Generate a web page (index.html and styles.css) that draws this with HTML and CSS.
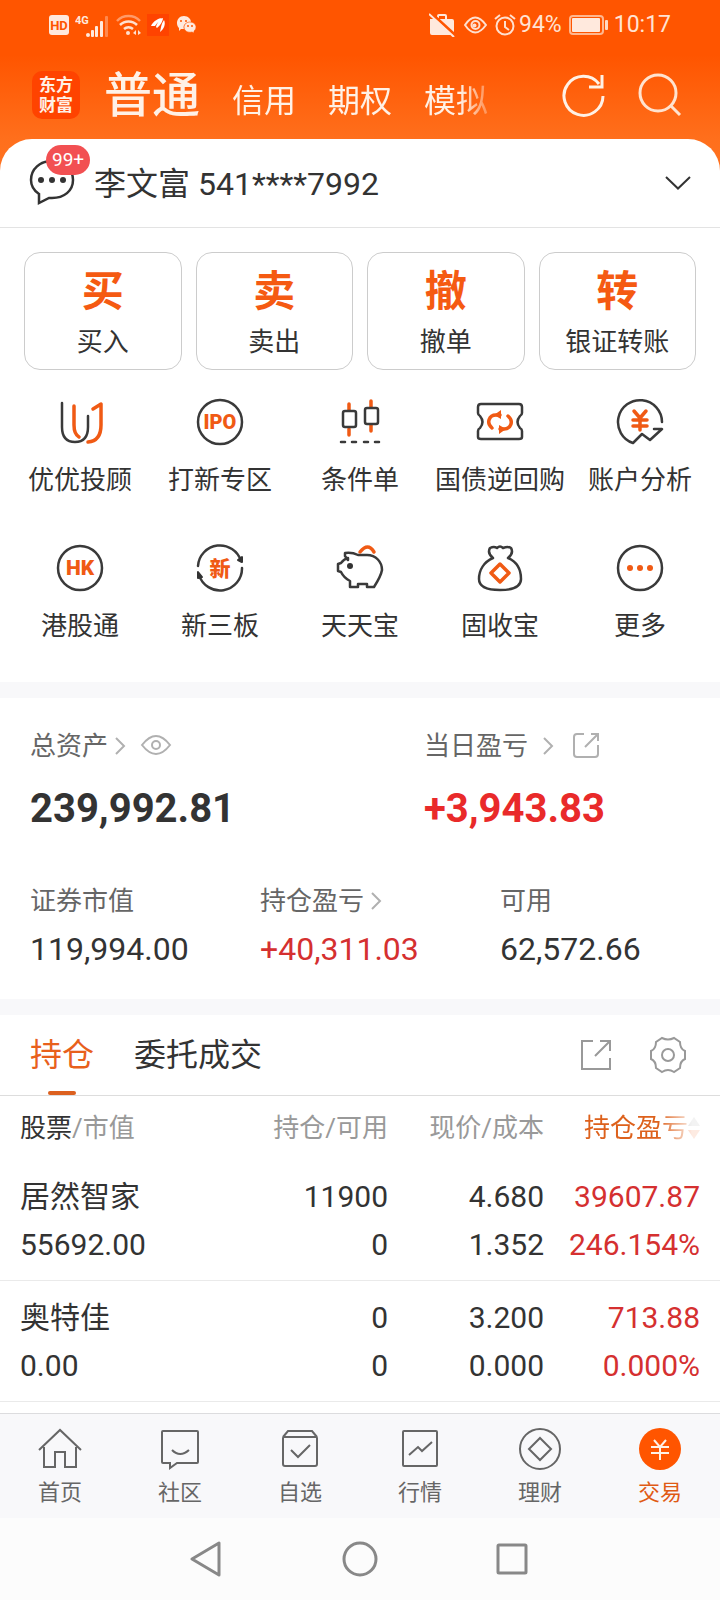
FILE: index.html
```html
<!DOCTYPE html>
<html lang="zh-CN">
<head>
<meta charset="utf-8">
<meta name="viewport" content="width=device-width, initial-scale=1">
<title>东方财富 - 交易</title>
<link rel="stylesheet" href="styles.css">
</head>
<body>
<div class="top">
  <div class="status">
    <div class="status-left">
      <svg width="20" height="20" viewBox="0 0 20 20"><rect width="20" height="20" rx="3" fill="#ffe9dd"/><text x="10" y="15" class="hd">HD</text></svg>
      <svg class="signal" width="34" height="24" viewBox="0 0 34 24"><text x="0" y="11" class="g4">4G</text><g fill="#ffe9dd"><circle cx="13" cy="22" r="2"/><rect x="16" y="17" width="3" height="7" rx="1"/><rect x="20" y="13" width="3" height="11" rx="1"/><rect x="25" y="8" width="3" height="16" rx="1"/><rect x="30" y="3" width="3" height="21" rx="1" opacity=".35"/></g></svg>
      <svg class="wifi" width="26" height="22" viewBox="0 0 26 22" fill="none" stroke="#ffe0cf" stroke-width="2.500"><path d="M1 7a16 16 0 0 1 23 0" opacity=".5"/><path d="M4 11a12 12 0 0 1 17 0"/><path d="M8 15a7 7 0 0 1 9 0"/><circle cx="12" cy="19" r="2" fill="#ffe0cf" stroke="none"/><path d="M20 16l-3 3 3 2zM22 16l3 3-3 2z" fill="#ffe0cf" stroke="none"/></svg>
      <svg width="22" height="22" viewBox="0 0 22 22"><rect width="22" height="22" fill="#ff4300"/><path d="M4 12C6 7 12 4 15 4 13 6 10 9 8 12zM9 13c1-4 4-8 7-9 0 3-3 8-6 10zM13 18c1-4 1-8 4-12 2 4 0 9-4 12z" fill="#fff"/></svg>
      <svg class="wechat" width="21" height="20" viewBox="0 0 21 20"><path d="M8 1c4 0 7 3 7 6-5 0-8 3-7 7l-3 0-2 2v-3C-1 9 1 1 8 1z" fill="#ffe9dd"/><path d="M14 7c4 0 6 3 6 5 0 2-1 3-2 4v2l-2-1c-4 1-8-1-8-5 0-3 3-5 6-5z" fill="#ffe9dd" stroke="#ff5500" stroke-width=".6"/><g fill="#ff5500"><circle cx="5" cy="6" r="1"/><circle cx="10" cy="6" r="1"/><circle cx="12" cy="11" r="1"/><circle cx="16" cy="11" r="1"/></g></svg>
    </div>
    <div class="status-right">
      <svg width="26" height="24" viewBox="0 0 26 24"><path d="M1 6h7V3q0-2 2-2h6q2 0 2 2v3h5q2 0 2 2v14H3q-2 0-2-2z" fill="#ffe9dd"/><path d="M10 3h6v3h-6z" fill="#ff5500"/><path d="M2 0l25 23" stroke="#ff5500" stroke-width="3"/><path d="M0 1l25 23" stroke="#ffe9dd" stroke-width="2"/></svg>
      <svg class="s-eye" width="23" height="18" viewBox="0 0 23 18" fill="none" stroke="#ffe0cf" stroke-width="2"><path d="M1 9q10-15 21 0-11 15-21 0z"/><circle cx="11.500" cy="9" r="4"/><circle cx="10.500" cy="9.500" r="2" fill="#ffe0cf" stroke="none"/></svg>
      <svg class="s-alarm" width="22" height="22" viewBox="0 0 22 22" fill="none" stroke="#ffe0cf" stroke-width="2"><circle cx="11" cy="12" r="8.500"/><path d="M1 5l5-4M16 1l5 4M11 7v6l4 3"/></svg>
      <span>94%</span>
      <svg class="battery" width="39" height="20" viewBox="0 0 39 20"><rect x="1" y="1" width="33" height="18" rx="3" fill="none" stroke="#ffb78f" stroke-width="2"/><rect x="3" y="3" width="28" height="14" rx="1" fill="#ffe9dd"/><rect x="36" y="5" width="3" height="10" rx="1" fill="#ffd8c2"/></svg>
      <time>10:17</time>
    </div>
  </div>
  <header class="header">
    <div class="logo"><span>东方</span><span>财富</span></div>
    <nav class="modes">
      <a class="current" href="#">普通</a><a href="#">信用</a><a href="#">期权</a><a href="#">模拟</a>
    </nav>
    <button class="icon-button" aria-label="刷新"><svg width="44" height="44" viewBox="0 0 44 44" fill="none" stroke="#fff1e6" stroke-width="3"><path d="M41 23A19.500 19.500 0 1 1 37 11"/><path d="M40 2v12H27"/></svg></button>
    <button class="icon-button" aria-label="搜索"><svg width="44" height="44" viewBox="0 0 44 44" fill="none" stroke="#ffe3cf" stroke-width="3"><circle cx="20" cy="20" r="18"/><path d="M32 32l10 10"/></svg></button>
  </header>
  <button class="account">
    <span class="chat">
      <svg width="46" height="46" viewBox="0 0 46 46" fill="none" stroke="#333" stroke-width="2.500"><path d="M10 34C4 30 2 25 2 20 2 9 11 1 23 1s21 8 21 19-9 18-21 18h-3l-10 5z"/><g fill="#333" stroke="none"><circle cx="12" cy="20" r="3"/><circle cx="23" cy="20" r="3"/><circle cx="34" cy="20" r="3"/></g></svg>
      <span class="badge">99+</span>
    </span>
    <span class="account-name">李文富 541****7992</span>
    <svg width="26" height="16" viewBox="0 0 26 16" fill="none" stroke="#333" stroke-width="2"><path d="M1 2l12 11.500L25 2"/></svg>
  </button>
</div>

<main>
  <section class="actions">
    <div class="cards">
      <button class="card"><b>买</b><span>买入</span></button>
      <button class="card"><b>卖</b><span>卖出</span></button>
      <button class="card"><b>撤</b><span>撤单</span></button>
      <button class="card"><b>转</b><span>银证转账</span></button>
    </div>
    <div class="services">
      <a href="#"><svg class="glyph" viewBox="0 0 48 48"><path class="dark" d="M6 5v24q0 15 13 15t13-15V18"/><path class="orange" d="M18 8v19q0 9 5 12M37 11l8-5v21q0 16-13 17"/></svg><span>优优投顾</span></a>
      <a href="#"><svg class="glyph" viewBox="0 0 48 48"><circle class="dark" cx="24" cy="24" r="22"/><text x="24" y="31" class="ipo">IPO</text></svg><span>打新专区</span></a>
      <a href="#"><svg class="glyph" viewBox="0 0 48 48"><path class="orange" d="M13 6v6M13 31v6M35 3v6M35 27v6"/><rect class="dark" x="7" y="13" width="13" height="16" rx="2"/><rect class="dark" x="29" y="10" width="13" height="16" rx="2"/><path class="dark" d="M5 44h4M16 44h4M28 44h4M39 44h4"/></svg><span>条件单</span></a>
      <a href="#"><svg class="glyph" viewBox="0 0 48 48"><path class="dark" d="M5 6h38q3 0 3 3v6q0 2-2 3-5 6 0 12 2 1 2 3v6q0 2-3 2H5q-3 0-3-2v-6q0-2 2-3 5-6 0-12-2-1-2-3V9q0-3 3-3z"/><path class="orange" d="M16 30C10 25 13 17 20 17h4M32 18c6 5 3 13-4 13h-4"/><path d="M18 17l7-5v9zM30 31l-7-4v9z" fill="#f05a14"/></svg><span>国债逆回购</span></a>
      <a href="#"><svg class="glyph" viewBox="0 0 48 48"><path class="dark" d="M46 24A22 22 0 1 0 17 45l9-9 8 6 12-11h-8"/><path class="orange" d="M18 13l6 7 6-7M17 22h14M17 28h14M24 20v12"/></svg><span>账户分析</span></a>
      <a href="#"><svg class="glyph" viewBox="0 0 48 48"><circle class="dark" cx="24" cy="24" r="22"/><text x="24" y="31" class="hk">HK</text></svg><span>港股通</span></a>
      <a href="#"><svg class="glyph" viewBox="0 0 48 48"><path class="dark" d="M2 22A22 22 0 0 1 45 17M46 24A22 22 0 0 1 3 31"/><path d="M42 16l4-3v5zM2 28l4 5-4 1z" fill="#333" stroke="#333" stroke-width="2"/><text x="24" y="32" class="xin">新</text></svg><span>新三板</span></a>
      <a href="#"><svg class="glyph" viewBox="0 0 48 48"><path class="dark" d="M12 16L9 12V9q7-1 13 2h9c9 0 15 7 15 15q-1 6-8 17h-7v-3H22v3h-8v-6q-6-3-9-9l-3-1v-7l3-1q3-4 7-5z"/><path class="orange" d="M24 8q8-10 14 0"/><circle cx="14" cy="22" r="3" fill="#333"/></svg><span>天天宝</span></a>
      <a href="#"><svg class="glyph" viewBox="0 0 48 48"><path class="dark" d="M17 14q-6-5-3-10 4-2 7 0 3-3 6 0 5-2 8 0 3 5-3 10c9 4 13 12 13 21q0 11-21 11T3 35c0-9 5-17 14-21z"/><path class="orange" d="M24 20l9 9-9 9-9-9z"/></svg><span>固收宝</span></a>
      <a href="#"><svg class="glyph" viewBox="0 0 48 48"><circle class="dark" cx="24" cy="24" r="22"/><g fill="#f05a14"><circle cx="14" cy="24" r="3"/><circle cx="24" cy="24" r="3"/><circle cx="34" cy="24" r="3"/></g></svg><span>更多</span></a>
    </div>
  </section>

  <section class="assets">
    <div class="totals">
      <div>
        <div class="label">总资产<svg class="chev" viewBox="0 0 12 18"><path d="M2 1l8 8-8 8"/></svg><svg class="eye" width="32" height="22" viewBox="0 0 32 22"><path d="M2 10Q16-8 30 10 16 28 2 10z"/><circle cx="16" cy="10" r="4"/></svg></div>
        <div class="total">239,992.81</div>
      </div>
      <div>
        <div class="label">当日盈亏<svg class="chev far" viewBox="0 0 12 18"><path d="M2 1l8 8-8 8"/></svg><svg class="share" width="28" height="28" viewBox="0 0 28 28"><path d="M12 2H5Q2 2 2 5v17q0 3 3 3h18q3 0 3-3V13M13 15L26 2M19 2h7v7"/></svg></div>
        <div class="total up">+3,943.83</div>
      </div>
    </div>
    <div class="details">
      <div><div class="label">证券市值</div><div class="value">119,994.00</div></div>
      <div><div class="label">持仓盈亏<svg class="chev" viewBox="0 0 12 18"><path d="M2 1l8 8-8 8"/></svg></div><div class="value up">+40,311.03</div></div>
      <div><div class="label">可用</div><div class="value">62,572.66</div></div>
    </div>
  </section>

  <section class="holdings">
    <div class="tabs">
      <button class="tab selected">持仓</button>
      <button class="tab">委托成交</button>
      <button class="icon-button tool" aria-label="分享"><svg width="32" height="32" viewBox="0 0 32 32"><path d="M13 2H2v28h28V19M15 17L30 2M20 2h10v10"/></svg></button>
      <button class="icon-button tool" aria-label="设置"><svg width="38" height="38" viewBox="0 0 38 38"><path d="M13 2q6 3 12 0l6 4q0 7 5 9v8q-5 2-5 9l-6 4q-6-4-12 0l-6-4q0-7-5-9v-8q5-2 5-9z"/><circle cx="19" cy="19" r="6"/></svg></button>
    </div>
    <table>
      <colgroup><col><col class="c2"><col class="c3"><col class="c4"></colgroup>
      <thead><tr><th><span class="ink">股票</span>/市值</th><th>持仓/可用</th><th>现价/成本</th><th><div class="sorted">持仓盈亏<svg width="12" height="24" viewBox="0 0 12 24"><path d="M6 1l6 9H0z" fill="#999"/><path d="M6 23l6-9H0z" fill="#f05a14"/></svg></div></th></tr></thead>
      <tbody>
        <tr><td>居然智家<br>55692.00</td><td>11900<br>0</td><td>4.680<br>1.352</td><td class="up">39607.87<br>246.154%</td></tr>
        <tr><td>奥特佳<br>0.00</td><td>0<br>0</td><td>3.200<br>0.000</td><td class="up">713.88<br>0.000%</td></tr>
      </tbody>
    </table>
  </section>
</main>

<nav class="tabbar">
  <a href="#"><svg viewBox="0 0 44 44"><path d="M1 23L22 3l21 20M6 20v20h11V25h10v15h11V20"/></svg>首页</a>
  <a href="#"><svg viewBox="0 0 44 44"><path d="M5 4h34q1 0 1 1v30q0 1-1 1H19l-7 5v-5H5q-1 0-1-1V5q0-1 1-1zM14 23q8 8 17 0"/></svg>社区</a>
  <a href="#"><svg viewBox="0 0 44 44"><path d="M5 10l5-6h24l5 6M6 10h32q1 0 1 1v26q0 2-2 2H7q-2 0-2-2V11q0-1 1-1zM13 23l7 7 12-12"/></svg>自选</a>
  <a href="#"><svg viewBox="0 0 44 44"><rect x="5" y="4" width="34" height="35" rx="1"/><path d="M11 28l9-8 4 4 10-9"/></svg>行情</a>
  <a href="#"><svg viewBox="0 0 44 44"><circle cx="22" cy="22" r="20"/><path d="M22 11l11 11-11 11-11-11z"/></svg>理财</a>
  <a class="active" href="#"><svg viewBox="0 0 44 44"><circle cx="22" cy="22" r="21" fill="#ff5500" stroke="none"/><path d="M16 13l6 7 6-7M13 20h18M13 26h18M22 20v13" stroke="#fff1e6"/></svg>交易</a>
</nav>
<div class="sysnav">
  <button aria-label="返回"><svg viewBox="0 0 36 36"><path d="M30 2v32L3 18z"/></svg></button>
  <button aria-label="主页"><svg viewBox="0 0 36 36"><circle cx="18" cy="18" r="16"/></svg></button>
  <button aria-label="最近"><svg viewBox="0 0 36 36"><rect x="3" y="4" width="28" height="28" rx="1"/></svg></button>
</div>
</body>
</html>
```
FILE: styles.css
```css
* { box-sizing: border-box; }

body {
  margin: 0;
  min-height: 100vh;
  display: flex;
  flex-direction: column;
  background: #fff;
  color: #333;
  font-family: Roboto, "Noto Sans CJK SC", sans-serif;
  font-size: 26px;
  line-height: 36px;
}

main { flex: 1; }
svg { display: block; flex: none; }
a { color: inherit; text-decoration: none; }
button {
  padding: 0;
  border: 0;
  background: none;
  color: inherit;
  font: inherit;
  cursor: pointer;
}

/* Header */
.top { background: linear-gradient(#ff5500 55px, #ff6f1c 139px, #ff7422 180px); }

.status {
  height: 50px;
  padding: 0 49px;
  display: flex;
  align-items: center;
  justify-content: space-between;
  color: #ffe3d3;
  font-size: 23px;
}
.status-left, .status-right { display: flex; align-items: center; }
.signal { margin-left: 6px; }
.wifi { margin: 0 5px 0 7px; }
.wechat { margin-left: 7px; }
.s-eye { margin: 0 7px 0 9px; }
.s-alarm { margin-right: 3px; }
.battery { margin: 0 6px 0 7px; }
.hd { font-size: 13px; font-weight: 700; fill: #ff5500; text-anchor: middle; }
.g4 { font-size: 11px; font-weight: 700; fill: #ffe9dd; }

.header {
  height: 89px;
  padding: 0 38px 0 32px;
  display: flex;
  align-items: center;
}
.logo {
  width: 48px;
  height: 48px;
  border-radius: 10px;
  background: #ff4300;
  color: #fff1e6;
  font-size: 17px;
  font-weight: 700;
  line-height: 20px;
  display: flex;
  flex-direction: column;
  align-items: center;
  justify-content: center;
}
.modes {
  margin-left: 24px;
  margin-right: auto;
  padding-top: 8px;
  display: flex;
  align-items: baseline;
  gap: 32px;
  color: #fff1e6;
  font-size: 32px;
  line-height: 56px;
  -webkit-mask-image: linear-gradient(to left, rgba(0, 0, 0, .3), #000 28px);
  mask-image: linear-gradient(to left, rgba(0, 0, 0, .3), #000 28px);
}
.modes .current { font-size: 48px; font-weight: 500; }
.icon-button { margin-left: 32px; }

.account {
  width: 100%;
  height: 89px;
  padding: 0 29px;
  display: flex;
  align-items: center;
  border-bottom: 1px solid #e3e3e3;
  border-radius: 32px 32px 0 0;
  background: #fff;
  font-size: 32px;
  text-align: left;
}
.chat { position: relative; }
.badge {
  position: absolute;
  left: 17px;
  top: -15px;
  padding: 0 6px;
  border-radius: 15px;
  background: #f25052;
  color: #fff;
  font-size: 19px;
  line-height: 30px;
}
.account-name { flex: 1; margin-left: 19px; padding-top: 2px; }

/* Trade actions */
.actions { padding: 24px 0 38px; border-bottom: 16px solid #f8f8fa; }
.cards {
  padding: 0 24px;
  display: grid;
  grid-template-columns: repeat(4, 1fr);
  gap: 14px;
}
.card {
  padding: 15px 0 9px;
  display: flex;
  flex-direction: column;
  align-items: center;
  gap: 8px;
  border: 1px solid #ccc;
  border-radius: 16px;
}
.card b { color: #f55a12; font-size: 42px; line-height: 48px; }
.services {
  padding: 28px 10px 0;
  display: grid;
  grid-template-columns: repeat(5, 1fr);
  row-gap: 46px;
}
.services a {
  display: flex;
  flex-direction: column;
  align-items: center;
  gap: 16px;
  white-space: nowrap;
}
.glyph { width: 48px; height: 48px; stroke-linecap: round; stroke-linejoin: round; }
.dark { fill: none; stroke: #3a3a3a; stroke-width: 2.5; }
.orange { fill: none; stroke: #f05a14; stroke-width: 3.5; }
.ipo, .hk, .xin { fill: #f05a14; font-weight: 900; text-anchor: middle; }
.ipo { font-size: 20px; }
.hk { font-size: 21px; }
.xin { font-size: 21px; }

/* Assets */
.assets { padding: 30px 30px; border-bottom: 16px solid #f8f8fa; }
.totals { display: grid; grid-template-columns: 394fr 266fr; }
.details { margin-top: 50px; display: grid; grid-template-columns: 230fr 240fr 190fr; }
.label { display: flex; align-items: center; color: #666; }
.label svg { fill: none; stroke: #b0b0b0; stroke-width: 2; }
.chev { width: 12px; height: 18px; margin-left: 6px; }
.chev.far { margin-left: 14px; }
.eye { margin-left: 14px; }
.share { margin-left: 18px; }
.total { margin-top: 21px; font-size: 40px; font-weight: 700; line-height: 48px; }
.value { margin-top: 10px; font-size: 32px; line-height: 40px; }
.up { color: #d53030; }
.total.up { color: #e92a2a; }

/* Holdings */
.tabs {
  height: 81px;
  padding: 0 33px 0 30px;
  display: flex;
  align-items: center;
  border-bottom: 1px solid #ddd;
}
.tab {
  position: relative;
  align-self: stretch;
  margin-right: 40px;
  font-size: 32px;
}
.tab.selected { color: #e8601c; }
.tab.selected::after {
  content: "";
  position: absolute;
  left: 50%;
  bottom: 0;
  width: 28px;
  height: 4px;
  margin-left: -14px;
  border-radius: 2px;
  background: #dc601f;
}
.tool { margin-left: 37px; }
.tab + .tool { margin-left: auto; }
.tool svg { fill: none; stroke: #999; stroke-width: 2; }

table { width: 100%; border-collapse: collapse; table-layout: fixed; }
.c2 { width: 160px; }
.c3 { width: 156px; }
.c4 { width: 176px; }
th, td { padding: 0; text-align: right; white-space: nowrap; }
th { color: #999; font-weight: 400; line-height: 64px; }
td {
  padding: 13px 0 11px;
  border-bottom: 1px solid #eaeaea;
  font-size: 30px;
  line-height: 48px;
}
th:first-child, td:first-child { padding-left: 20px; text-align: left; }
th:last-child, td:last-child { padding-right: 20px; }
.ink { color: #333; }
.sorted {
  display: flex;
  align-items: center;
  justify-content: flex-end;
  color: #dd611c;
  -webkit-mask-image: linear-gradient(to left, rgba(0, 0, 0, .12) 8px, #000 42px);
  mask-image: linear-gradient(to left, rgba(0, 0, 0, .12) 8px, #000 42px);
}

/* Bottom bars */
.tabbar {
  height: 105px;
  padding-top: 13px;
  display: grid;
  grid-template-columns: repeat(6, 1fr);
  border-top: 1px solid #dcdcde;
  background: #f8f8fa;
  color: #666;
  font-size: 22px;
  line-height: 32px;
}
.tabbar a { display: flex; flex-direction: column; align-items: center; gap: 6px; }
.tabbar svg { width: 44px; height: 44px; fill: none; stroke: #666; stroke-width: 2; }
.tabbar .active { color: #e05a14; }
.sysnav {
  height: 82px;
  display: flex;
  align-items: center;
  justify-content: center;
  gap: 117px;
  background: #fcfcfc;
}
.sysnav svg { width: 36px; height: 36px; fill: none; stroke: #888; stroke-width: 3; stroke-linejoin: round; }
```
